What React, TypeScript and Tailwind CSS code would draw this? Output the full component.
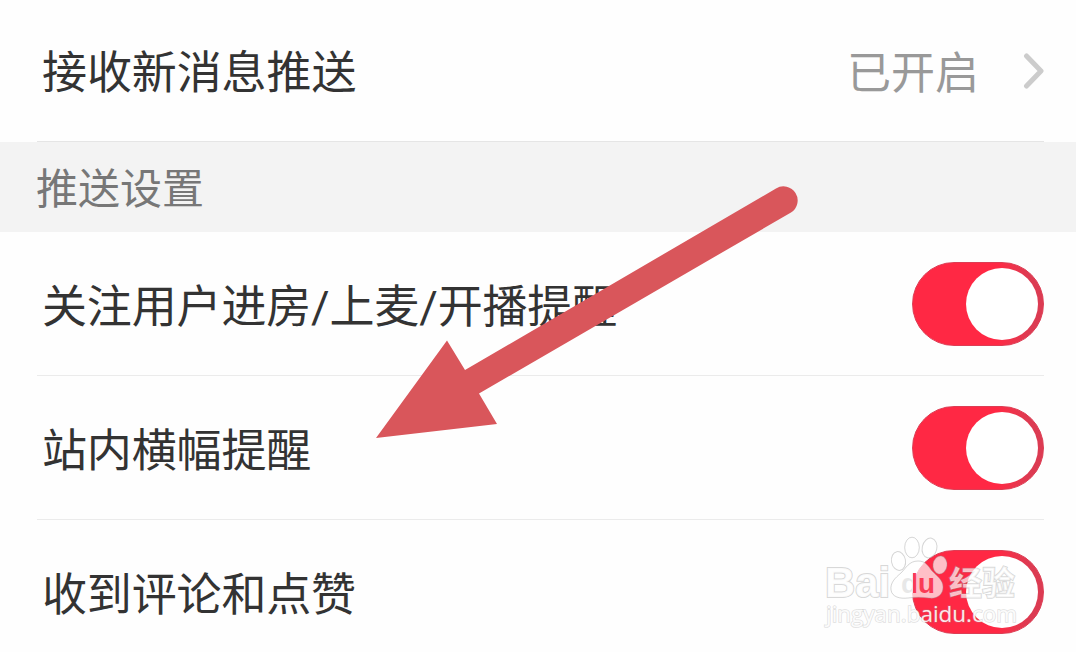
import { useState } from 'react';

const settings = [
  { id: 'live', label: '关注用户进房/上麦/开播提醒' },
  { id: 'banner', label: '站内横幅提醒' },
  { id: 'comments', label: '收到评论和点赞' },
];

const Toggle = ({ label }: { label: string }) => {
  const [on, setOn] = useState(true);

  return (
    <button
      role="switch"
      aria-checked={on}
      aria-label={label}
      onClick={() => setOn(!on)}
      className={`flex h-[84px] w-[132px] shrink-0 items-center rounded-full border px-[5px] ${
        on
          ? 'justify-end border-[#dd3d54] bg-linear-to-r from-[#ff2844] from-65% to-[#dc3b52] to-90%'
          : 'justify-start border-gray-300 bg-gray-200'
      }`}
    >
      <span className="size-[72px] rounded-full bg-white" />
    </button>
  );
};

const Arrow = () => (
  <svg
    className="pointer-events-none absolute top-[180px] left-[370px]"
    width="440"
    height="270"
    viewBox="370 180 440 270"
    fill="#d9565b"
  >
    <path d="M376 438 L447 340.5 L465 370 L776 188.5 A14 14 0 0 1 791 212.5 L479 393.5 L497 424 Z" />
  </svg>
);

const Watermark = () => (
  <svg
    className="pointer-events-none absolute top-[530px] left-[816px]"
    width="210"
    height="106"
    viewBox="816 530 210 106"
    fill="#fff"
    fillOpacity="0.7"
    stroke="#999"
    strokeOpacity="0.4"
    strokeWidth="1"
  >
    <ellipse cx="898.5" cy="561" rx="7" ry="9.5" transform="rotate(-10 898.5 561)" />
    <ellipse cx="912" cy="547.5" rx="7.3" ry="10.3" />
    <ellipse cx="929.5" cy="548" rx="7.3" ry="10" transform="rotate(12 929.5 548)" />
    <ellipse cx="940" cy="565" rx="7" ry="9" transform="rotate(8 940 565)" />
    <path d="M918 561 C909 561 906 568 901 573 C895 578 890 583 891 590 C892 597 900 599 908 598 C915 597 922 597 929 598 C938 599 943 594 943 587 C943 580 937 576 932 571 C928 566 926 561 918 561 Z" />
    <text x="825" y="597" fontSize="43" fontWeight="700" textLength="65" lengthAdjust="spacingAndGlyphs" style={{ paintOrder: 'stroke' }} fillOpacity="0.9" strokeWidth="2" className="font-['Liberation_Sans',sans-serif]">
      Bai
    </text>
    <text x="901" y="593" fontSize="27" fontWeight="700" textLength="34" lengthAdjust="spacingAndGlyphs" fill="url(#duFill)" fillOpacity="1" stroke="none" className="font-['Liberation_Sans',sans-serif]">
      du
    </text>
    <defs>
      {/* the first letter sits half on white, half on the switch */}
      <linearGradient id="duFill" gradientUnits="userSpaceOnUse" x1="901" x2="935" y1="0" y2="0">
        <stop offset="0.36" stopColor="#e8e8e8" />
        <stop offset="0.36" stopColor="#fa3b55" />
      </linearGradient>
    </defs>
    <text x="949" y="595" fontSize="33" fontWeight="700" textLength="66" style={{ paintOrder: 'stroke' }} strokeWidth="1.6" className="font-['Noto_Sans_CJK_SC',sans-serif]">
      经验
    </text>
    <text x="826" y="622" fontSize="22" textLength="191" lengthAdjust="spacingAndGlyphs" style={{ paintOrder: 'stroke' }} fillOpacity="0.9" strokeOpacity="0.3" strokeWidth="1.6" className="font-['Open_Sans',sans-serif]">
      jingyan.baidu.com
    </text>
  </svg>
);

const App = () => {
  return (
    <div className="relative h-[652px] w-[1076px] overflow-hidden bg-[#fefefe] font-[Roboto,'Noto_Sans_CJK_SC',sans-serif] text-[45px] leading-[60px] text-[#333]">
      <div className="flex h-[142px] items-center justify-between pr-8 pl-[42px]">
        <span className="pt-1.5 tracking-[-0.1px]">接收新消息推送</span>
        <div className="flex items-center text-[44px] text-[#999]">
          <span className="pt-1.5">已开启</span>
          <svg className="ml-[41px]" width="24" height="38" viewBox="0 0 24 38" fill="none" stroke="#ccc" strokeWidth="5" strokeLinecap="round" strokeLinejoin="round">
            <path d="M6.5 4 L21 19 L6.5 34" />
          </svg>
        </div>
      </div>

      <div className="h-[90px] bg-[#f3f3f3]">
        <div className="mr-8 ml-[37px] h-px -translate-y-px bg-[#e5e5e5]" />
        <h2 className="pt-[17px] pl-9 text-[42px] text-[#777]">推送设置</h2>
      </div>

      {settings.map((item) => (
        <div
          key={item.id}
          className="mr-8 ml-[37px] flex h-36 items-center justify-between border-b border-[#ebebeb] pl-[5px]"
        >
          <span className="pt-2 tracking-[-0.15px]">{item.label}</span>
          <Toggle label={item.label} />
        </div>
      ))}

      <Arrow />
      <Watermark />
    </div>
  );
};

export default App;
